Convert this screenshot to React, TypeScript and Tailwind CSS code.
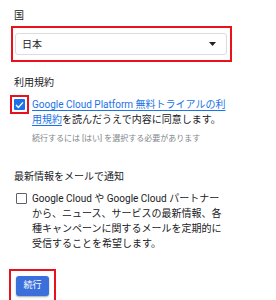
export default function App() {
  return (
    <div className="w-[276px] h-[300px] bg-white text-[#202124] font-['Roboto','Noto_Sans_CJK_JP',sans-serif] text-[10px] leading-[15px] overflow-hidden">
      <div className="pt-[8px] pl-[14px]">国</div>

      <div className="mt-[3px] ml-[11px] w-[221px] h-[36px] border-2 border-[#e8121b] pt-[5px] pl-[2px] pr-[3px]">
        <div className="h-[22px] border border-[#dadce0] rounded-[3px] flex items-center justify-between pl-[6px] pr-[10px]">
          <span>日本</span>
          <svg width="7" height="4" viewBox="0 0 7 4">
            <path d="M0 0 L7 0 L3.5 4 Z" fill="#202124" />
          </svg>
        </div>
      </div>

      <div className="mt-[13px] pl-[14px]">利用規約</div>

      <div className="mt-[5px] flex">
        <div className="ml-[10px] w-[19px] h-[19px] border-2 border-[#e8121b] flex items-center justify-center shrink-0">
          <div className="w-[11px] h-[11px] bg-[#1a73e8] rounded-[1px] flex items-center justify-center">
            <svg width="9" height="8" viewBox="0 0 9 8">
              <path d="M1 4 L3.4 6.4 L8 1.4" stroke="white" strokeWidth="1.4" fill="none" />
            </svg>
          </div>
        </div>
        <div className="ml-[3px] pt-[2px] w-[200px]">
          <p>
            <span className="text-[#1a73e8] underline decoration-[#1a73e8] underline-offset-2">
              Google Cloud Platform 無料トライアルの利用規約
            </span>
            を読んだうえで内容に同意します。
          </p>
          <p className="mt-[6px] text-[8px] leading-[12px] text-[#80868b]">
            続行するには [はい] を選択する必要があります
          </p>
        </div>
      </div>

      <div className="mt-[24px] pl-[14px]">最新情報をメールで通知</div>

      <div className="mt-[7px] flex">
        <div className="ml-[16px] mt-[2px] w-[11px] h-[11px] border-[1.5px] border-[#5f6368] rounded-[1px] shrink-0" />
        <p className="ml-[5px] w-[192px]">
          Google Cloud や Google Cloud パートナーから、ニュース、サービスの最新情報、各種キャンペーンに関するメールを定期的に受信することを希望します。
        </p>
      </div>

      <div className="mt-[18px] ml-[9px] w-[47px] h-[33px] border-2 border-[#e8121b] flex items-center justify-center">
        <button className="w-[33px] h-[20px] rounded-[3px] bg-[#3b6fdc] text-white text-[9px] shadow-[0_1px_2px_rgba(0,0,0,0.35)]">
          続行
        </button>
      </div>
    </div>
  );
}
